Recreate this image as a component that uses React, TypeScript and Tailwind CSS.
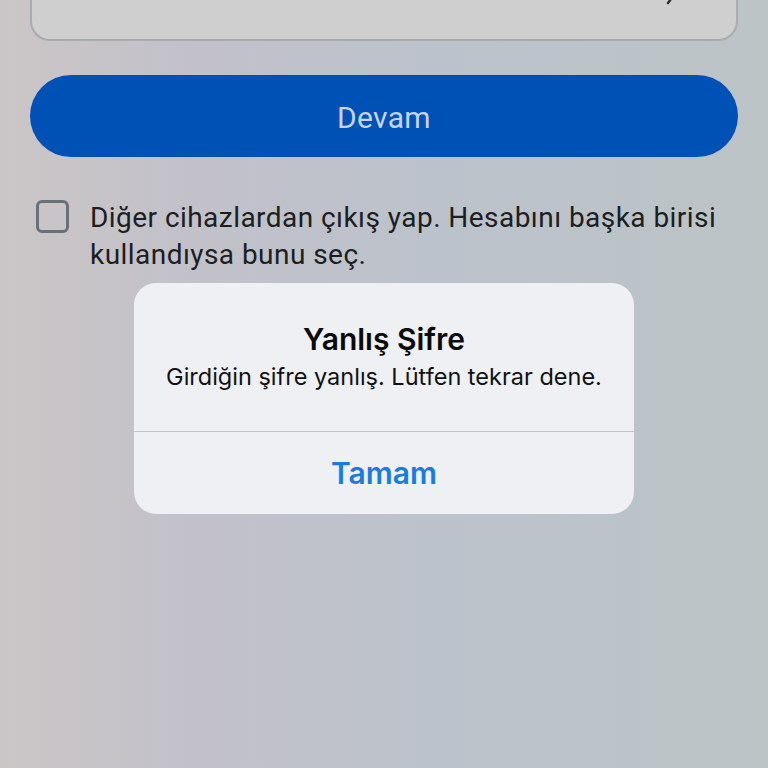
export default function App() {
  return (
    <div className="relative h-[768px] w-[768px] overflow-hidden bg-[linear-gradient(90deg,#cbc6c6_0%,#c2c1ca_25%,#bcc2cb_55%,#bcc4c6_100%)] font-['Roboto',sans-serif]">
      <div className="flex flex-col px-[30px]">
        {/* password field, cut off at top */}
        <div className="relative -mt-[60px] h-[101px] rounded-[20px] border-2 border-[#a9abad] bg-[#cfcfcf]">
          <svg className="absolute bottom-[34px] right-[60px] h-[10px] w-[10px]" viewBox="0 0 10 10">
            <path d="M8 0 L2 8" stroke="#2a2b2d" strokeWidth="2.4" strokeLinecap="round" />
          </svg>
        </div>

        <button className="mt-[34px] flex h-[82px] items-center justify-center rounded-full bg-[#0051b5] pt-[3px] text-[30px] font-normal tracking-[0.3px] text-[#c6d3ea]">
          Devam
        </button>

        <div className="mt-[42px] flex items-start gap-[21px] pl-[6px]">
          <div className="mt-[1px] h-[33px] w-[33px] shrink-0 rounded-[6px] border-[3px] border-[#6a7077]" />
          <p className="text-[28px] leading-[37px] tracking-[0.45px] text-[#1c1e21]">
            Diğer cihazlardan çıkış yap. Hesabını başka birisi kullandıysa bunu seç.
          </p>
        </div>
      </div>

      {/* alert dialog */}
      <div className="absolute left-[134px] top-[283px] w-[500px] overflow-hidden rounded-[22px] bg-[#eef0f3] font-['Inter',sans-serif]">
        <div className="flex h-[148px] flex-col items-center pt-[37px]">
          <h2 className="text-[30px] font-semibold leading-[38px] text-[#0b0b0c]">Yanlış Şifre</h2>
          <p className="mt-[4px] text-[23.5px] leading-[30px] text-[#111113]">
            Girdiğin şifre yanlış. Lütfen tekrar dene.
          </p>
        </div>
        <div className="h-px bg-[#c3c5c9]" />
        <button className="flex h-[82px] w-full items-center justify-center text-[30px] font-semibold text-[#1a7ce0]">
          Tamam
        </button>
      </div>
    </div>
  );
}
